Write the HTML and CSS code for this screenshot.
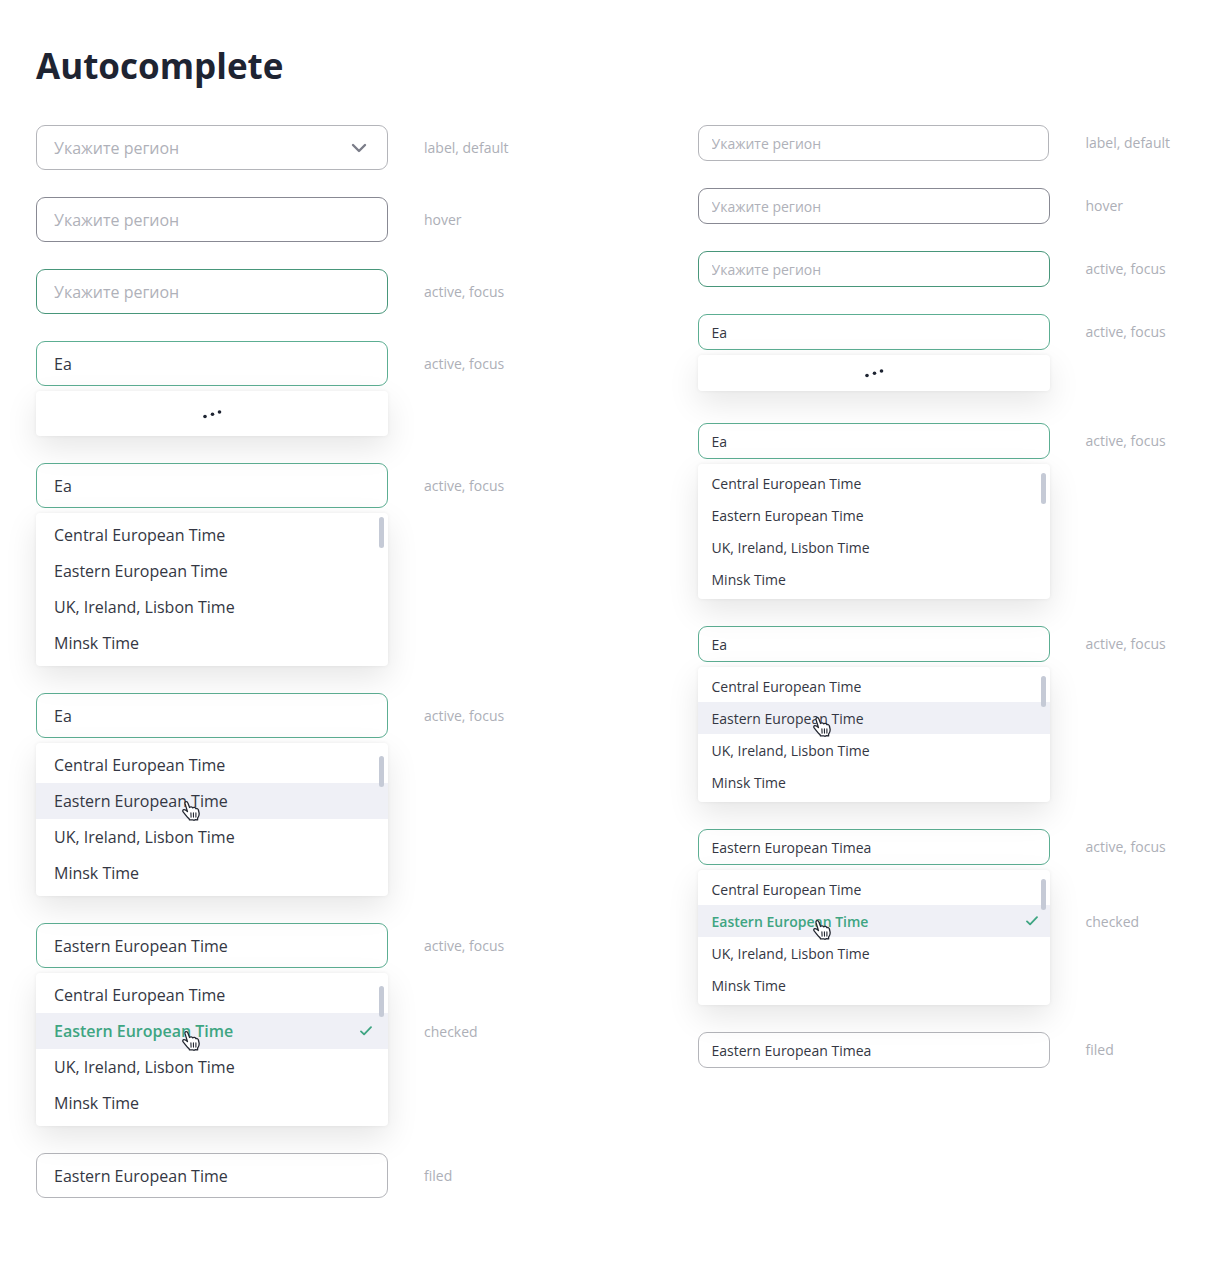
FILE: index.html
```html
<!DOCTYPE html>
<html lang="en">
<head>
<meta charset="utf-8">
<meta name="viewport" content="width=device-width, initial-scale=1">
<title>Autocomplete</title>
<link rel="stylesheet" href="styles.css">
</head>
<body>
<svg class="sprite" aria-hidden="true">
  <symbol id="chevron" viewBox="0 0 24 24"><path d="M6 9l6 6 6-6" fill="none" stroke="currentColor" stroke-width="2.4" stroke-linecap="round" stroke-linejoin="round"/></symbol>
  <symbol id="check" viewBox="0 0 12 10"><path d="M1 5.4l3.1 3L11 1.2" fill="none" stroke="currentColor" stroke-width="1.8" stroke-linecap="round" stroke-linejoin="round"/></symbol>
  <symbol id="dots" viewBox="0 0 20 10"><g fill="currentColor"><circle cx="3" cy="7.5" r="1.8"/><circle cx="10.5" cy="5.3" r="1.8"/><circle cx="17.5" cy="3" r="1.8"/></g></symbol>
  <symbol id="hand" viewBox="0 0 18 20"><path d="M3.1 2.900C2.700 1.500 3.200.8 4.100.7 5 .6 5.600 1.100 5.900 2L7.600 6.500C8.200 5.500 10.200 5.500 10.800 6.900 11.500 6.100 13.300 6.300 13.900 7.700 15 7.200 16.100 7.800 16.400 9L17.100 12.200C17.400 14.300 16.500 15.900 15.600 17.200V18.900L13.400 18.600 12.200 19.300 10.800 18.900H7.500L7 17.600C5 16.300 3.200 13.200 1.300 11.100.4 10.100.7 9 1.700 8.700 3 8.300 4.200 9.300 5.500 10.600Z" fill="#fff" stroke="#222630" stroke-width="1.300" stroke-linejoin="round"/><path d="M8.900 11.900l.2 4.200M11.400 11.900l.1 4.200M13.900 11.900v4.200" fill="none" stroke="#222630" stroke-width="1.100" stroke-linecap="round"/></symbol>
</svg>
<main class="page">
  <h1 class="title">Autocomplete</h1>
  <div class="columns">
    <section class="column">
      <div class="row">
        <div class="field">
          <div class="control">
            <input class="input" id="l1" type="text" placeholder="Укажите регион">
            <button class="toggle" type="button" aria-label="Open list"><svg class="chevron"><use href="#chevron"/></svg></button>
          </div>
        </div>
        <div class="notes"><label class="note" for="l1">label, default</label></div>
      </div>
      <div class="row">
        <div class="field"><div class="control is-hover"><input class="input" id="l2" type="text" placeholder="Укажите регион"></div></div>
        <div class="notes"><label class="note" for="l2">hover</label></div>
      </div>
      <div class="row">
        <div class="field"><div class="control is-focus"><input class="input" id="l3" type="text" placeholder="Укажите регион"></div></div>
        <div class="notes"><label class="note" for="l3">active, focus</label></div>
      </div>
      <div class="row">
        <div class="field">
          <div class="control is-active"><input class="input" id="l4" type="text" value="Ea"></div>
          <div class="panel loading"><svg class="dots" role="img" aria-label="Loading"><use href="#dots"/></svg></div>
        </div>
        <div class="notes"><label class="note" for="l4">active, focus</label></div>
      </div>
      <div class="row">
        <div class="field">
          <div class="control is-active"><input class="input" id="l5" type="text" value="Ea"></div>
          <div class="panel">
            <ul class="options" role="listbox" aria-label="Time zones">
              <li class="option" role="option">Central European Time</li>
              <li class="option" role="option">Eastern European Time</li>
              <li class="option" role="option">UK, Ireland, Lisbon Time</li>
              <li class="option" role="option">Minsk Time</li>
            </ul>
            <span class="thumb thumb-top"></span>
          </div>
        </div>
        <div class="notes"><label class="note" for="l5">active, focus</label></div>
      </div>
      <div class="row">
        <div class="field">
          <div class="control is-active"><input class="input" id="l6" type="text" value="Ea"></div>
          <div class="panel">
            <ul class="options" role="listbox" aria-label="Time zones">
              <li class="option" role="option">Central European Time</li>
              <li class="option is-over" role="option">Eastern European Time<svg class="hand"><use href="#hand"/></svg></li>
              <li class="option" role="option">UK, Ireland, Lisbon Time</li>
              <li class="option" role="option">Minsk Time</li>
            </ul>
            <span class="thumb"></span>
          </div>
        </div>
        <div class="notes"><label class="note" for="l6">active, focus</label></div>
      </div>
      <div class="row">
        <div class="field">
          <div class="control is-active"><input class="input" id="l7" type="text" value="Eastern European Time"></div>
          <div class="panel">
            <ul class="options" role="listbox" aria-label="Time zones">
              <li class="option" role="option">Central European Time</li>
              <li class="option is-over is-checked" role="option" aria-selected="true">Eastern European Time<svg class="check"><use href="#check"/></svg><svg class="hand"><use href="#hand"/></svg></li>
              <li class="option" role="option">UK, Ireland, Lisbon Time</li>
              <li class="option" role="option">Minsk Time</li>
            </ul>
            <span class="thumb"></span>
          </div>
        </div>
        <div class="notes"><label class="note" for="l7">active, focus</label><span class="note">checked</span></div>
      </div>
      <div class="row">
        <div class="field"><div class="control"><input class="input" id="l8" type="text" value="Eastern European Time"></div></div>
        <div class="notes"><label class="note" for="l8">filed</label></div>
      </div>
    </section>

    <section class="column compact">
      <div class="row">
        <div class="field"><div class="control"><input class="input" id="r1" type="text" placeholder="Укажите регион"></div></div>
        <div class="notes"><label class="note" for="r1">label, default</label></div>
      </div>
      <div class="row">
        <div class="field"><div class="control is-hover"><input class="input" id="r2" type="text" placeholder="Укажите регион"></div></div>
        <div class="notes"><label class="note" for="r2">hover</label></div>
      </div>
      <div class="row">
        <div class="field"><div class="control is-focus"><input class="input" id="r3" type="text" placeholder="Укажите регион"></div></div>
        <div class="notes"><label class="note" for="r3">active, focus</label></div>
      </div>
      <div class="row">
        <div class="field">
          <div class="control is-active"><input class="input" id="r4" type="text" value="Ea"></div>
          <div class="panel loading"><svg class="dots" role="img" aria-label="Loading"><use href="#dots"/></svg></div>
        </div>
        <div class="notes"><label class="note" for="r4">active, focus</label></div>
      </div>
      <div class="row">
        <div class="field">
          <div class="control is-active"><input class="input" id="r5" type="text" value="Ea"></div>
          <div class="panel">
            <ul class="options" role="listbox" aria-label="Time zones">
              <li class="option" role="option">Central European Time</li>
              <li class="option" role="option">Eastern European Time</li>
              <li class="option" role="option">UK, Ireland, Lisbon Time</li>
              <li class="option" role="option">Minsk Time</li>
            </ul>
            <span class="thumb"></span>
          </div>
        </div>
        <div class="notes"><label class="note" for="r5">active, focus</label></div>
      </div>
      <div class="row">
        <div class="field">
          <div class="control is-active"><input class="input" id="r6" type="text" value="Ea"></div>
          <div class="panel">
            <ul class="options" role="listbox" aria-label="Time zones">
              <li class="option" role="option">Central European Time</li>
              <li class="option is-over" role="option">Eastern European Time<svg class="hand"><use href="#hand"/></svg></li>
              <li class="option" role="option">UK, Ireland, Lisbon Time</li>
              <li class="option" role="option">Minsk Time</li>
            </ul>
            <span class="thumb"></span>
          </div>
        </div>
        <div class="notes"><label class="note" for="r6">active, focus</label></div>
      </div>
      <div class="row">
        <div class="field">
          <div class="control is-active"><input class="input" id="r7" type="text" value="Eastern European Timea"></div>
          <div class="panel">
            <ul class="options" role="listbox" aria-label="Time zones">
              <li class="option" role="option">Central European Time</li>
              <li class="option is-over is-checked" role="option" aria-selected="true">Eastern European Time<svg class="check"><use href="#check"/></svg><svg class="hand"><use href="#hand"/></svg></li>
              <li class="option" role="option">UK, Ireland, Lisbon Time</li>
              <li class="option" role="option">Minsk Time</li>
            </ul>
            <span class="thumb"></span>
          </div>
        </div>
        <div class="notes"><label class="note" for="r7">active, focus</label><span class="note">checked</span></div>
      </div>
      <div class="row">
        <div class="field"><div class="control"><input class="input" id="r8" type="text" value="Eastern European Timea"></div></div>
        <div class="notes"><label class="note" for="r8">filed</label></div>
      </div>
    </section>
  </div>
</main>
</body>
</html>
```
FILE: styles.css
```css
* {
  box-sizing: border-box;
}

body {
  margin: 0;
  background: #fff;
  color: #343743;
  font-family: "Open Sans", sans-serif;
}

.sprite {
  position: absolute;
  width: 0;
  height: 0;
}

.page {
  padding: 40px 36px 80px;
}

.title {
  margin: 0 0 33px;
  color: #1e2432;
  font-size: 35px;
  line-height: 52px;
  font-weight: 700;
}

.columns {
  display: grid;
  grid-template-columns: 7fr 5fr;
}

.column {
  --control-height: 45px;
  --option-height: 36px;
  --inset: 18px;
  --text: 16px;
  display: flex;
  flex-direction: column;
  gap: 27px;
}

.compact {
  --control-height: 36px;
  --option-height: 32px;
  --inset: 14px;
  --text: 14px;
}

.row {
  display: flex;
  gap: 36px;
}

.field {
  display: flex;
  flex: 0 1 352px;
  flex-direction: column;
  gap: 5px;
  min-width: 0;
}

.control {
  display: flex;
  align-items: center;
  height: var(--control-height);
  border: 1px solid #b4b5ba;
  border-radius: 9px;
}

.control.is-hover {
  border-color: #888993;
}

.control.is-focus {
  border-color: #48967a;
}

.control.is-active {
  border-color: #5cae92;
}

.input {
  flex: 1;
  min-width: 0;
  height: 100%;
  padding: 0 calc(var(--inset) - 1px);
  border: 0;
  outline: 0;
  background: transparent;
  color: inherit;
  font: inherit;
  font-size: var(--text);
}

.input::placeholder {
  color: #afb1b9;
  opacity: 1;
}

.toggle {
  display: flex;
  margin-right: 16px;
  padding: 0;
  border: 0;
  background: none;
  color: #7b7d89;
  cursor: pointer;
}

.chevron {
  width: 24px;
  height: 24px;
}

.panel {
  position: relative;
  padding: 4px 0 5px;
  border-radius: 4px;
  background: #fff;
  box-shadow: 0 0 4px rgba(0, 0, 0, 0.06), 0 12px 32px rgba(0, 0, 0, 0.1);
}

.compact .panel {
  padding: 3px 0 4px;
}

.column .loading {
  display: flex;
  align-items: center;
  justify-content: center;
  height: var(--control-height);
  padding: 0;
}

.compact .loading {
  margin-bottom: 5px;
}

.dots {
  width: 20px;
  height: 10px;
  color: #1e2432;
}

.options {
  margin: 0;
  padding: 0;
  list-style: none;
}

.option {
  position: relative;
  display: flex;
  align-items: center;
  justify-content: space-between;
  height: var(--option-height);
  padding: 0 calc(var(--inset) - 2px) 0 var(--inset);
  font-size: var(--text);
}

.option.is-over {
  background: #eff0f6;
}

.option.is-checked {
  color: #3ea582;
  font-weight: 600;
}

.check {
  width: 12px;
  height: 10px;
}

.hand {
  position: absolute;
  top: 18px;
  left: 146px;
  width: 18px;
  height: 20px;
  z-index: 1;
}

.compact .hand {
  top: 15px;
  left: 115px;
}

.thumb {
  position: absolute;
  top: 13px;
  right: 4px;
  width: 5px;
  height: 31px;
  border-radius: 3px;
  background: #c5cad6;
}

.thumb-top {
  top: 4px;
}

.compact .thumb {
  top: 9px;
}

.notes {
  display: flex;
  flex-direction: column;
  gap: 41px;
}

.compact .notes {
  gap: 39px;
}

.note {
  color: #adafb7;
  font-size: 14px;
  line-height: var(--control-height);
  white-space: nowrap;
}
```
